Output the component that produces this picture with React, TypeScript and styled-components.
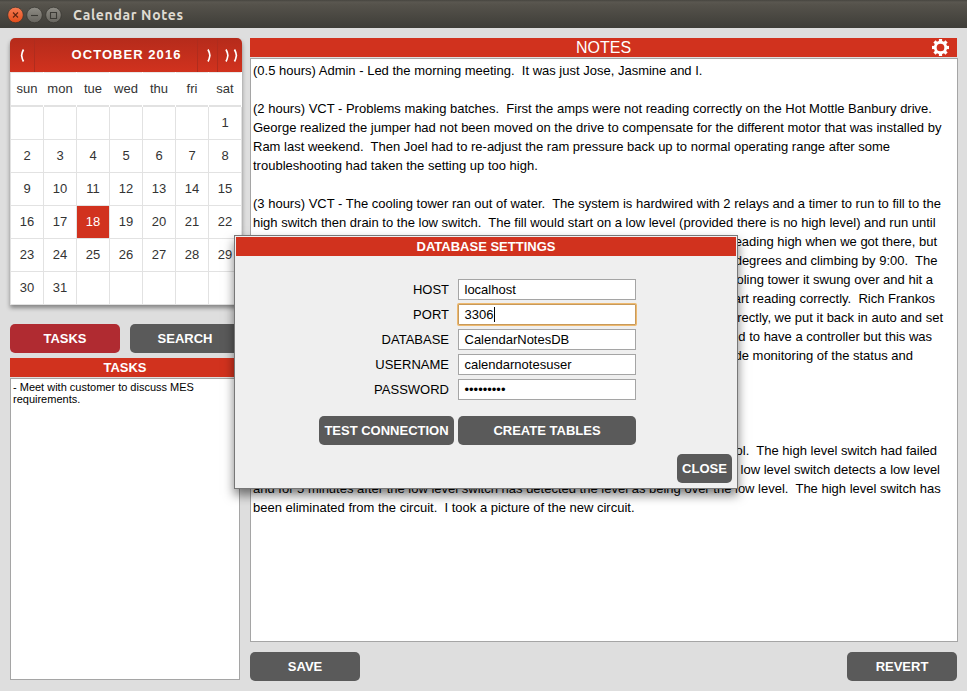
import React from "react";
import styled, { createGlobalStyle, css } from "styled-components";

const RED = "#d1321e";

const GlobalStyle = createGlobalStyle`
  * { box-sizing: border-box; }
  body { margin: 0; background: #dedede; overflow: hidden; }
  body, button, input { font-family: "Liberation Sans", Arial, sans-serif; font-size: 13px; }
`;

const Window = styled.div`
  position: relative;
  width: 967px;
  height: 691px;
  display: flex;
  flex-direction: column;
  background: #dedede;
  overflow: hidden;
`;

const TitleBar = styled.header`
  height: 28px;
  flex: none;
  display: flex;
  align-items: center;
  padding: 1px 0 0 7px;
  gap: 2px;
  background: linear-gradient(#47453f 0, #5a5750 2px, #55524b 5px, #3e3d38 100%);
`;

const WindowTitle = styled.h1`
  margin: 0 0 0 9px;
  font: bold 14px/20px Ubuntu, "Noto Sans", sans-serif;
  letter-spacing: 0.65px;
  color: #dfdbd2;
`;

const Body = styled.main`
  display: flex;
  flex: 1;
  gap: 10px;
  padding: 10px 9px 10px 10px;
`;

const Sidebar = styled.aside`
  width: 230px;
  flex: none;
  display: flex;
  flex-direction: column;
`;

const Calendar = styled.section`
  width: 232px;
  height: 267px;
  flex: none;
  border-radius: 5px 5px 0 0;
  box-shadow: 0 3px 4px rgba(0, 0, 0, 0.4);
  overflow: visible;
`;

const CalendarHeader = styled.div`
  height: 34px;
  display: grid;
  grid-template-columns: 25px 162px 20px 25px;
  border-radius: 5px 5px 0 0;
  background: linear-gradient(#b52b1b, #d1321e);
  color: #fff;
  overflow: hidden;
`;

const Month = styled.div`
  padding-left: 21px;
  text-align: center;
  font-weight: bold;
  line-height: 33px;
  letter-spacing: 1.05px;
`;

const NavButton = styled.button<{ $side: "left" | "right" }>`
  padding: 0;
  border: 0;
  border-${(p) => (p.$side === "left" ? "right" : "left")}: 1px solid #b02c1d;
  background: none;
  color: #fff;
  display: flex;
  align-items: center;
  justify-content: center;
  ${(p) => p.$side === "right" && css`padding-left: 3px;`}
`;

const Weekdays = styled.div`
  height: 35px;
  display: grid;
  grid-template-columns: repeat(7, 33px);
  background: #fff;
  border-left: 1px solid #e2e2e2;
  color: #333;
  line-height: 32px;
  text-align: center;
`;

const Weekday = styled.span`
  border-top: 1px solid #e8e8e8;
  border-bottom: 2px solid #e2e2e2;
  margin-right: 1px;
  white-space: nowrap;
`;

const Days = styled.div`
  display: grid;
  grid-template-columns: repeat(7, 33px);
  grid-auto-rows: 33px;
  border-left: 1px solid #e2e2e2;
  background: #fff;
`;

const Day = styled.span<{ $today?: boolean }>`
  border-right: 1px solid #e2e2e2;
  border-bottom: 1px solid #e2e2e2;
  text-align: center;
  line-height: 32px;
  color: #333;
  ${(p) => p.$today && css`background: ${RED}; background-clip: padding-box; color: #fff;`}
`;

const Button = styled.button<{ $width: number; $active?: boolean }>`
  width: ${(p) => p.$width}px;
  height: 29px;
  flex: none;
  padding: 0;
  border: 0;
  border-radius: 5px;
  background: ${(p) => (p.$active ? "#b02b31" : "#5a5a5a")};
  color: #fff;
  font-weight: bold;
  line-height: 29px;
  text-align: center;
  white-space: nowrap;
`;

const Tabs = styled.nav`
  display: flex;
  gap: 10px;
  margin: 19px 0 5px;
`;

const PanelTitle = styled.h2<{ $large?: boolean }>`
  margin: 0;
  height: 19px;
  flex: none;
  display: flex;
  align-items: center;
  justify-content: center;
  background: ${RED};
  color: #fff;
  font-size: ${(p) => (p.$large ? 16 : 13)}px;
  font-weight: ${(p) => (p.$large ? "normal" : "bold")};
  line-height: 19px;
`;

const TaskText = styled.div`
  height: 302px;
  margin-top: 1px;
  padding: 2px;
  border: 1px solid #a5a5a5;
  background: #fff;
  font-size: 11px;
  line-height: 12px;
  color: #000;
`;

const NotesColumn = styled.section`
  width: 708px;
  display: flex;
  flex-direction: column;
`;

const NotesHeader = styled.div`
  display: grid;
  grid-template-columns: 1fr;
  width: 707px;
`;

const GearButton = styled.button`
  grid-area: 1 / 1;
  justify-self: end;
  width: 17px;
  height: 19px;
  margin-right: 8px;
  padding: 1px 0 0;
  border: 0;
  background: none;
  display: flex;
`;

const NotesTitle = styled(PanelTitle)`
  grid-area: 1 / 1;
`;

const NotesText = styled.div`
  height: 584px;
  margin-top: 1px;
  padding: 2px;
  border: 1px solid #a5a5a5;
  background: #fff;
  color: #000;
`;

const NoteLine = styled.div<{ $end?: number }>`
  height: 19px;
  line-height: 19px;
  white-space: pre;
  ${(p) => p.$end && css`width: ${p.$end}px; text-align: right;`}
`;

const Actions = styled.div`
  width: 707px;
  display: flex;
  justify-content: space-between;
  margin-top: 10px;
`;

const Dialog = styled.section`
  position: absolute;
  left: 234px;
  top: 235px;
  width: 504px;
  height: 254px;
  padding: 1px;
  border: 1px solid #777;
  background: #efefef;
  box-shadow: 0 6px 10px rgba(0, 0, 0, 0.5);
`;

const Fields = styled.div`
  display: grid;
  grid-template-columns: 213px 178px;
  column-gap: 9px;
  row-gap: 4px;
  margin-top: 23px;
`;

const Label = styled.label`
  text-align: right;
  line-height: 21px;
  color: #000;
`;

const Field = styled.div<{ $focused?: boolean }>`
  height: 21px;
  display: flex;
  align-items: center;
  padding-left: 5.5px;
  border: 1px solid ${(p) => (p.$focused ? "#c79a5c" : "#a5a5a5")};
  background: #fff;
  color: #000;
  line-height: 19px;
  ${(p) => p.$focused && css`box-shadow: 0 0 0 1px #eeb96e; border-radius: 1px;`}
`;

const Caret = styled.span`
  width: 1px;
  height: 15px;
  margin-left: 1px;
  background: #000;
`;

const DialogActions = styled.div`
  display: flex;
  gap: 4px;
  margin: 16px 0 9px 83px;
`;

const DialogFooter = styled.div`
  display: flex;
  justify-content: flex-end;
  padding-right: 4px;
`;

const noteLines: { text: string; end?: number }[] = [
  { text: "(0.5 hours) Admin - Led the morning meeting.  It was just Jose, Jasmine and I." },
  { text: "" },
  { text: "(2 hours) VCT - Problems making batches.  First the amps were not reading correctly on the Hot Mottle Banbury drive." },
  { text: "George realized the jumper had not been moved on the drive to compensate for the different motor that was installed by" },
  { text: "Ram last weekend.  Then Joel had to re-adjust the ram pressure back up to normal operating range after some" },
  { text: "troubleshooting had taken the setting up too high." },
  { text: "" },
  { text: "(3 hours) VCT - The cooling tower ran out of water.  The system is hardwired with 2 relays and a timer to run to fill to the" },
  { text: "high switch then drain to the low switch.  The fill would start on a low level (provided there is no high level) and run until" },
  { text: "reading high when we got there, but", end: 684 },
  { text: "degrees and climbing by 9:00.  The", end: 684.5 },
  { text: "cooling tower it swung over and hit a", end: 680 },
  { text: "start reading correctly.  Rich Frankos", end: 682 },
  { text: "correctly, we put it back in auto and set", end: 690 },
  { text: "used to have a controller but this was", end: 679 },
  { text: "provide monitoring of the status and", end: 660 },
  { text: "" },
  { text: "" },
  { text: "" },
  { text: "" },
  { text: "control.  The high level switch had failed", end: 684 },
  { text: "low level switch detects a low level", end: 687 },
  { text: "and for 5 minutes after the low level switch has detected the level as being over the low level.  The high level switch has" },
  { text: "been eliminated from the circuit.  I took a picture of the new circuit." },
];

const fields = [
  { label: "HOST", value: "localhost" },
  { label: "PORT", value: "3306", focused: true },
  { label: "DATABASE", value: "CalendarNotesDB" },
  { label: "USERNAME", value: "calendarnotesuser" },
  { label: "PASSWORD", value: "•••••••••" },
];

const days = Array.from({ length: 42 }, (_, i) => (i >= 6 && i < 37 ? i - 5 : null));

function WindowButton({ kind }: { kind: "close" | "min" | "max" }) {
  const close = kind === "close";
  return (
    <svg width="17" height="18" viewBox="0 0 17 18">
      <defs>
        <linearGradient id={kind} x1="0" y1="0" x2="0" y2="1">
          <stop offset="0" stopColor={close ? "#f67c53" : "#8f8d86"} />
          <stop offset="1" stopColor={close ? "#e34d1a" : "#67655f"} />
        </linearGradient>
      </defs>
      <circle cx="8.5" cy="9" r="7.8" fill={`url(#${kind})`} stroke="#35332e" strokeWidth="0.7" />
      <g fill="none" stroke={close ? "#5e2410" : "#3b3a35"} strokeWidth="1.1">
        {close && <path d="M6 6.5l5 5m0-5l-5 5" />}
        {kind === "min" && <path d="M5 9.5h7" />}
        {kind === "max" && <path d="M5.5 6.5h6v6h-6z" />}
      </g>
    </svg>
  );
}

function Chevron({ direction, count = 1 }: { direction: "left" | "right"; count?: number }) {
  const right = "M1 1.5Q2.4 4 2.9 7.5Q2.4 11 1 13.5";
  const left = "M3.5 1.5Q2.1 4 1.6 7.5Q2.1 11 3.5 13.5";
  return (
    <svg width={count === 2 ? 14 : 5} height="15" fill="none" stroke="#fff" strokeWidth="1.7">
      <path d={direction === "left" ? left : right} />
      {count === 2 && <path d={right} transform="translate(8.5 0)" />}
    </svg>
  );
}

function Gear() {
  return (
    <svg width="17" height="17" viewBox="-8.5 -8.5 17 17" fill="none" stroke="#fff">
      <circle r="5.25" strokeWidth="2.8" />
      {[0, 45, 90, 135, 180, 225, 270, 315].map((angle) => (
        <path key={angle} d="M0 -5.5V-8.5" strokeWidth="3.2" transform={`rotate(${angle})`} />
      ))}
    </svg>
  );
}

export default function App() {
  return (
    <>
      <GlobalStyle />
      <Window>
        <TitleBar>
          <WindowButton kind="close" />
          <WindowButton kind="min" />
          <WindowButton kind="max" />
          <WindowTitle>Calendar Notes</WindowTitle>
        </TitleBar>
        <Body>
          <Sidebar>
            <Calendar>
              <CalendarHeader>
                <NavButton $side="left"><Chevron direction="left" /></NavButton>
                <Month>OCTOBER 2016</Month>
                <NavButton $side="right"><Chevron direction="right" /></NavButton>
                <NavButton $side="right"><Chevron direction="right" count={2} /></NavButton>
              </CalendarHeader>
              <Weekdays>
                {["sun", "mon", "tue", "wed", "thu", "fri", "sat"].map((d) => <Weekday key={d}>{d}</Weekday>)}
              </Weekdays>
              <Days>
                {days.map((d, i) => <Day key={i} $today={d === 18}>{d}</Day>)}
              </Days>
            </Calendar>
            <Tabs>
              <Button $width={110} $active>TASKS</Button>
              <Button $width={110}>SEARCH</Button>
            </Tabs>
            <PanelTitle>TASKS</PanelTitle>
            <TaskText>- Meet with customer to discuss MES requirements.</TaskText>
          </Sidebar>
          <NotesColumn>
            <NotesHeader>
              <NotesTitle $large>NOTES</NotesTitle>
              <GearButton aria-label="Settings"><Gear /></GearButton>
            </NotesHeader>
            <NotesText>
              {noteLines.map((line, i) => <NoteLine key={i} $end={line.end}>{line.text}</NoteLine>)}
            </NotesText>
            <Actions>
              <Button $width={110}>SAVE</Button>
              <Button $width={110}>REVERT</Button>
            </Actions>
          </NotesColumn>
        </Body>
        <Dialog role="dialog">
          <PanelTitle>DATABASE SETTINGS</PanelTitle>
          <Fields>
            {fields.map((f) => (
              <React.Fragment key={f.label}>
                <Label>{f.label}</Label>
                <Field $focused={f.focused}>{f.value}{f.focused && <Caret />}</Field>
              </React.Fragment>
            ))}
          </Fields>
          <DialogActions>
            <Button $width={135}>TEST CONNECTION</Button>
            <Button $width={178}>CREATE TABLES</Button>
          </DialogActions>
          <DialogFooter>
            <Button $width={55}>CLOSE</Button>
          </DialogFooter>
        </Dialog>
      </Window>
    </>
  );
}
